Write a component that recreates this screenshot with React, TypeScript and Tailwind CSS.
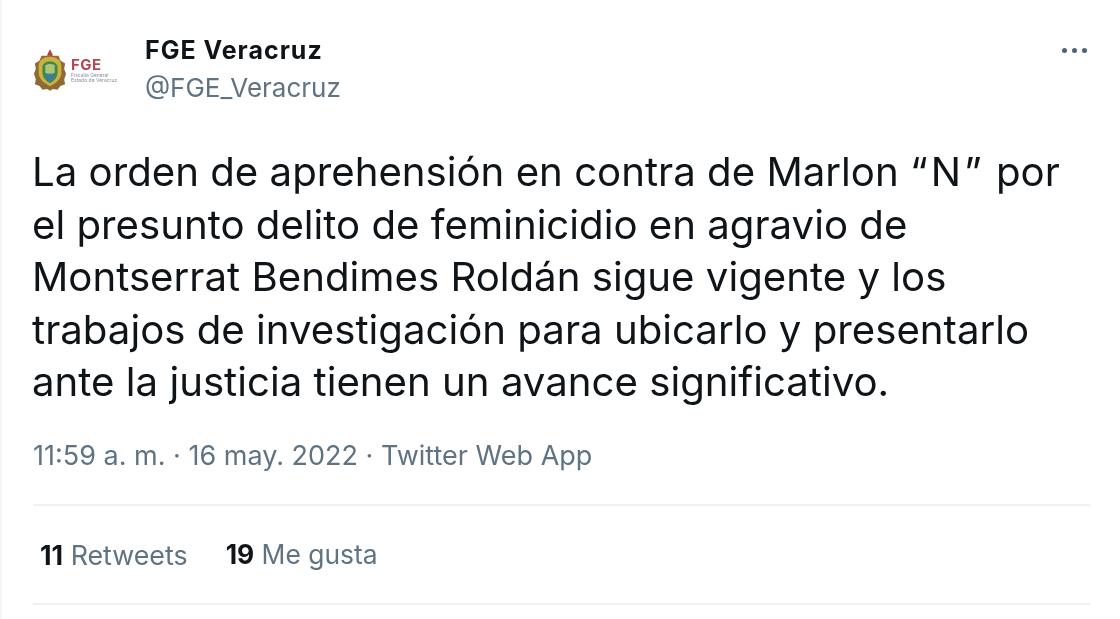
const font = "[font-family:Inter,'Liberation_Sans',sans-serif]";

function Crest() {
  return (
    <svg width="34" height="43" viewBox="0 0 36 45" className="shrink-0">
      <path d="M18 1l3 6 6 0 2 5 5 3-1 6 2 5-2 6 1 5-5 2-3 4-5-1-3 2-3-2-5 1-3-4-5-2 1-5-2-6 2-5-1-6 5-3 2-5 6 0z" fill="#8f6a35" />
      <path d="M18 8c6 0 12 3 12 10v7c0 7-7 12-12 14-5-2-12-7-12-14v-7c0-7 6-10 12-10z" fill="#cdb13f" />
      <path d="M18 13c4 0 8 2 8 6v6c0 5-4 9-8 11-4-2-8-6-8-11v-6c0-4 4-6 8-6z" fill="#3f8a4a" />
      <path d="M13 17c3-2 7-2 10 0v8c-3 2-7 2-10 0z" fill="#a9c67a" />
      <path d="M12 28c3-3 9-3 12 0-1 3-3 6-6 7-3-1-5-4-6-7z" fill="#3d7f8f" />
      <path d="M18 0l3 6h-6z" fill="#b5443c" />
    </svg>
  );
}

export default function App() {
  return (
    <div className={`h-[619px] w-[1120px] overflow-hidden border-l-2 border-[#f3f5f8] bg-white pl-[31px] pr-[30px] blur-[0.4px] ${font}`}>
      <div className="flex h-[119px] items-start">
        <div className="flex w-[112px] items-center gap-[4px] pt-[49px]">
          <Crest />
          <div className="mt-[-1px]">
            <div className="text-[15px] leading-[14px] font-bold tracking-[0.5px] text-[#b5474f]">FGE</div>
            <div className="mt-[1px] text-[5px] leading-[5px] whitespace-nowrap text-[#8a8f96]">Fiscalía General</div>
            <div className="text-[5px] leading-[5px] whitespace-nowrap text-[#8a8f96]">Estado de Veracruz</div>
          </div>
        </div>
        <div className="flex-1 pt-[35px]">
          <div className="text-[25px] leading-[30px] font-bold tracking-[1px] text-[#0f1419]">FGE Veracruz</div>
          <div className="mt-[8px] text-[26px] leading-[30px] text-[#5f7382]">@FGE_Veracruz</div>
        </div>
        <div className="flex gap-[5px] pt-[48px] pr-[3px]">
          <span className="h-[5px] w-[5px] rounded-full bg-[#4f6473]" />
          <span className="h-[5px] w-[5px] rounded-full bg-[#4f6473]" />
          <span className="h-[5px] w-[5px] rounded-full bg-[#4f6473]" />
        </div>
      </div>

      <p className="mt-[27px] -ml-[1px] whitespace-nowrap text-[40.2px] leading-[52.5px] text-[#0f1419]">
        La orden de aprehensión en contra de Marlon <span className="tracking-[3px]">“N”</span> por
        <br />
        el presunto delito de feminicidio en agravio de
        <br />
        Montserrat Bendimes Roldán sigue vigente y los
        <br />
        trabajos de investigación para ubicarlo y presentarlo
        <br />
        ante la justicia tienen un avance significativo.
      </p>

      <div className="mt-[30px] text-[27px] leading-[34px] text-[#5f7382]">
        11:59 a. m. · 16 may. 2022 · Twitter Web App
      </div>

      <div className="mt-[31px] border-t-2 border-[#eff2f5]" />
      <div className="flex h-[97px] items-center gap-[38px] pt-[2px] pl-[7px] text-[#5f7382]">
        <span className="text-[26.8px]"><b className="font-bold text-[#0f1419]">11</b> Retweets</span>
        <span className="text-[26.4px]"><b className="font-bold text-[#0f1419]">19</b> Me gusta</span>
      </div>
      <div className="border-t-2 border-[#eff2f5]" />
    </div>
  );
}
